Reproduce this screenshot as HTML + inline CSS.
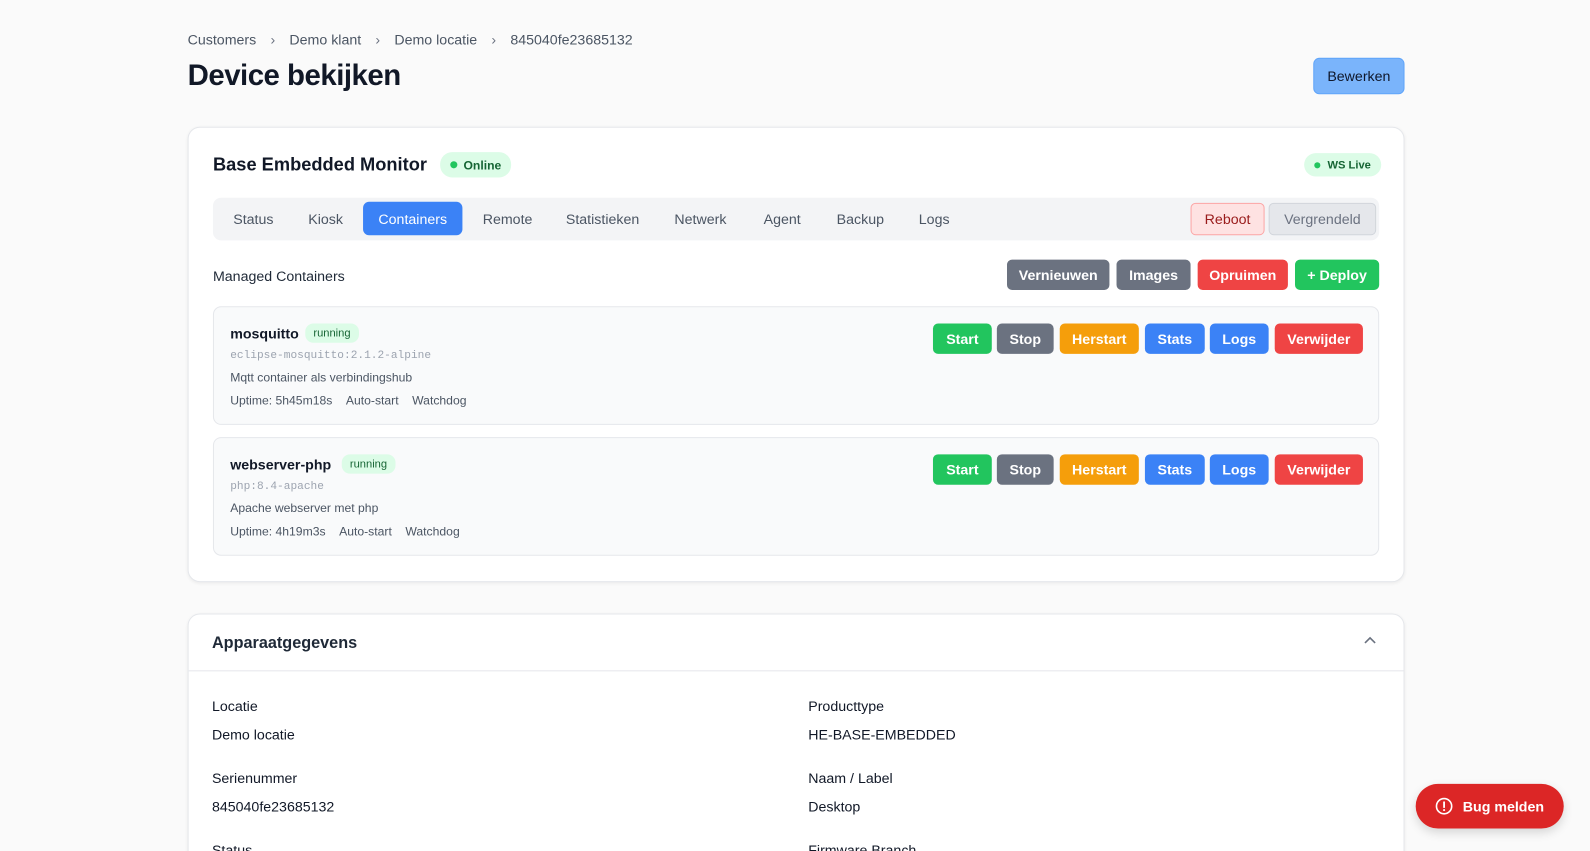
<!DOCTYPE html>
<html style="width:1590px;height:851px;overflow:hidden"><head><meta charset="utf-8"><style>
*{box-sizing:border-box;margin:0;padding:0}
body{width:1590px;height:851px;overflow:hidden;background:#fafafa;font-family:"Liberation Sans",sans-serif;color:#111827;position:relative}
#w{position:absolute;left:0;top:0;width:1590px;height:851px;transform:scale(1.0141);transform-origin:0 0}
.abs{position:absolute}
.crumb{left:185px;top:31px;font-size:14px;color:#4b5563}
.crumb span.sep{margin:0 14px;color:#6b7280}
h1{position:absolute;left:185px;top:59px;font-size:29px;font-weight:700;letter-spacing:-0.5px}
.edit{left:1295px;top:57px;width:90px;height:36px;background:#7ab4fb;border:1px solid #60a5fa;border-radius:6px;font-size:14px;display:flex;align-items:center;justify-content:center;color:#0f172a}
.card{position:absolute;left:185px;width:1200px;background:#fff;border:1px solid #e5e7eb;border-radius:12px;box-shadow:0 1px 3px rgba(0,0,0,.06)}
.btn{position:absolute;height:30px;border-radius:5px;color:#fff;font-size:14px;font-weight:700;display:flex;align-items:center;justify-content:center}
.g{background:#22c55e}.s{background:#6b7280}.o{background:#f59e0b}.b{background:#3b82f6}.r{background:#ef4444}
.pill{display:inline-flex;align-items:center;border-radius:12px;background:#dcfce7;color:#166534}
.tab{position:absolute;top:20px;font-size:14px;color:#4b5563}
.item{position:absolute;left:24px;width:1150px;height:117px;background:#f9fafb;border:1px solid #e5e7eb;border-radius:8px}
.mono{font-family:"Liberation Mono",monospace;font-size:11px;color:#9ca3af}
.lbl{font-size:14px;font-weight:500}
.val{font-size:14px}
</style></head><body><div id="w">
<div class="abs crumb">Customers<span class="sep">›</span>Demo klant<span class="sep">›</span>Demo locatie<span class="sep">›</span>845040fe23685132</div>
<h1>Device bekijken</h1>
<div class="abs edit">Bewerken</div>

<div class="card" style="top:125px;height:449px">
  <div class="abs" style="left:24px;top:26px;font-size:18px;font-weight:700">Base Embedded Monitor</div>
  <div class="abs pill" style="left:248px;top:24px;height:25px;padding:0 10px;font-size:12px;font-weight:700"><span style="width:7px;height:7px;border-radius:50%;background:#22c55e;margin-right:6px"></span>Online</div>
  <div class="abs pill" style="left:1100px;top:25px;height:23px;padding:0 10px;font-size:11px;font-weight:700"><span style="width:6px;height:6px;border-radius:50%;background:#22c55e;margin-right:7px"></span>WS Live</div>
  <div class="abs" style="left:24px;top:69px;width:1150px;height:42px;background:#f3f4f6;border-radius:8px">
    <div class="tab" style="left:20px;top:13px">Status</div>
    <div class="tab" style="left:94px;top:13px">Kiosk</div>
    <div class="abs" style="left:148px;top:4px;width:98px;height:33px;background:#3b82f6;border-radius:6px;color:#fff;font-size:14px;display:flex;align-items:center;justify-content:center">Containers</div>
    <div class="tab" style="left:266px;top:13px">Remote</div>
    <div class="tab" style="left:348px;top:13px">Statistieken</div>
    <div class="tab" style="left:455px;top:13px">Netwerk</div>
    <div class="tab" style="left:543px;top:13px">Agent</div>
    <div class="tab" style="left:615px;top:13px">Backup</div>
    <div class="tab" style="left:696px;top:13px">Logs</div>
    <div class="abs" style="left:964px;top:5px;width:73px;height:32px;background:#fee2e2;border:1px solid #fca5a5;border-radius:5px;color:#991b1b;font-size:14px;display:flex;align-items:center;justify-content:center">Reboot</div>
    <div class="abs" style="left:1041px;top:5px;width:106px;height:32px;background:#e5e7eb;border:1px solid #d1d5db;border-radius:5px;color:#6b7280;font-size:14px;display:flex;align-items:center;justify-content:center">Vergrendeld</div>
  </div>
  <div class="abs" style="left:24px;top:138px;font-size:14px;font-weight:500;color:#1f2937">Managed Containers</div>
  <div class="btn s" style="left:807px;top:130px;width:101px">Vernieuwen</div>
  <div class="btn s" style="left:915px;top:130px;width:73px">Images</div>
  <div class="btn r" style="left:995px;top:130px;width:89px">Opruimen</div>
  <div class="btn g" style="left:1091px;top:130px;width:83px">+ Deploy</div>

  <div class="item" style="top:176px">
    <div class="abs" style="left:16px;top:18px;font-size:14px;font-weight:700">mosquitto</div>
    <div class="abs pill" style="left:90px;top:16px;height:19px;padding:0 8px;font-size:11px;border-radius:8px">running</div>
    <div class="abs mono" style="left:16px;top:42px">eclipse-mosquitto:2.1.2-alpine</div>
    <div class="abs" style="left:16px;top:62px;font-size:12px;color:#4b5563">Mqtt container als verbindingshub</div>
    <div class="abs" style="left:16px;top:85px;font-size:12px;color:#4b5563">Uptime: 5h45m18s&nbsp;&nbsp;&nbsp;&nbsp;Auto-start&nbsp;&nbsp;&nbsp;&nbsp;Watchdog</div>
    <div class="btn g" style="left:709px;top:16px;width:58px">Start</div>
    <div class="btn s" style="left:772px;top:16px;width:56px">Stop</div>
    <div class="btn o" style="left:834px;top:16px;width:78px">Herstart</div>
    <div class="btn b" style="left:918px;top:16px;width:59px">Stats</div>
    <div class="btn b" style="left:982px;top:16px;width:58px">Logs</div>
    <div class="btn r" style="left:1046px;top:16px;width:87px">Verwijder</div>
  </div>
  <div class="item" style="top:305px">
    <div class="abs" style="left:16px;top:18px;font-size:14px;font-weight:700">webserver-php</div>
    <div class="abs pill" style="left:126px;top:16px;height:19px;padding:0 8px;font-size:11px;border-radius:8px">running</div>
    <div class="abs mono" style="left:16px;top:42px">php:8.4-apache</div>
    <div class="abs" style="left:16px;top:62px;font-size:12px;color:#4b5563">Apache webserver met php</div>
    <div class="abs" style="left:16px;top:85px;font-size:12px;color:#4b5563">Uptime: 4h19m3s&nbsp;&nbsp;&nbsp;&nbsp;Auto-start&nbsp;&nbsp;&nbsp;&nbsp;Watchdog</div>
    <div class="btn g" style="left:709px;top:16px;width:58px">Start</div>
    <div class="btn s" style="left:772px;top:16px;width:56px">Stop</div>
    <div class="btn o" style="left:834px;top:16px;width:78px">Herstart</div>
    <div class="btn b" style="left:918px;top:16px;width:59px">Stats</div>
    <div class="btn b" style="left:982px;top:16px;width:58px">Logs</div>
    <div class="btn r" style="left:1046px;top:16px;width:87px">Verwijder</div>
  </div>
</div>

<div class="card" style="top:605px;height:260px">
  <div class="abs" style="left:23px;top:20px;font-size:16px;font-weight:700;color:#1f2937">Apparaatgegevens</div>
  <svg class="abs" style="left:1158px;top:21px" width="14" height="10" viewBox="0 0 14 10"><path d="M2 7 L7 2 L12 7" fill="none" stroke="#6b7280" stroke-width="1.6"/></svg>
  <div class="abs" style="left:0;top:55px;width:1198px;height:1px;background:#e5e7eb"></div>
  <div class="abs lbl" style="left:23px;top:82px">Locatie</div>
  <div class="abs val" style="left:23px;top:110px">Demo locatie</div>
  <div class="abs lbl" style="left:23px;top:153px">Serienummer</div>
  <div class="abs val" style="left:23px;top:181px">845040fe23685132</div>
  <div class="abs lbl" style="left:23px;top:224px">Status</div>
  <div class="abs lbl" style="left:611px;top:82px">Producttype</div>
  <div class="abs val" style="left:611px;top:110px">HE-BASE-EMBEDDED</div>
  <div class="abs lbl" style="left:611px;top:153px">Naam / Label</div>
  <div class="abs val" style="left:611px;top:181px">Desktop</div>
  <div class="abs lbl" style="left:611px;top:224px">Firmware Branch</div>
</div>

<div class="abs" style="left:1396px;top:773px;width:146px;height:44px;border-radius:22px;background:#dc2626;color:#fff;font-size:14px;font-weight:700;display:flex;align-items:center;justify-content:center;box-shadow:0 4px 10px rgba(0,0,0,.15)">
  <svg width="18" height="18" viewBox="0 0 18 18" style="margin-right:9px"><circle cx="9" cy="9" r="7.5" fill="none" stroke="#fff" stroke-width="1.6"/><path d="M9 5v5" stroke="#fff" stroke-width="1.8" stroke-linecap="round"/><circle cx="9" cy="12.8" r="1" fill="#fff"/></svg>Bug melden
</div>
</div></body></html>
